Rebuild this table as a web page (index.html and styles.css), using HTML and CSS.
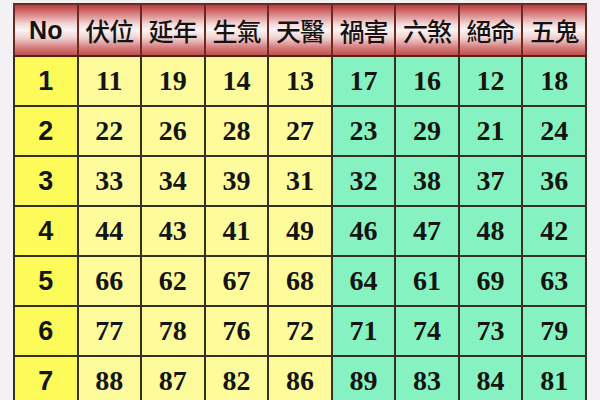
FILE: index.html
```html
<!DOCTYPE html>
<html>
<head>
<meta charset="utf-8">
<link rel="stylesheet" href="styles.css">
</head>
<body>
<div class="page">
<table class="grid">
<thead>
<tr class="head">
<th class="no-h">No</th><th>伏位</th><th>延年</th><th>生氣</th><th>天醫</th><th>禍害</th><th>六煞</th><th>絕命</th><th>五鬼</th>
</tr>
</thead>
<tbody>
<tr><td class="no">1</td><td class="y">11</td><td class="y">19</td><td class="y">14</td><td class="y">13</td><td class="g">17</td><td class="g">16</td><td class="g">12</td><td class="g">18</td></tr>
<tr><td class="no">2</td><td class="y">22</td><td class="y">26</td><td class="y">28</td><td class="y">27</td><td class="g">23</td><td class="g">29</td><td class="g">21</td><td class="g">24</td></tr>
<tr><td class="no">3</td><td class="y">33</td><td class="y">34</td><td class="y">39</td><td class="y">31</td><td class="g">32</td><td class="g">38</td><td class="g">37</td><td class="g">36</td></tr>
<tr><td class="no">4</td><td class="y">44</td><td class="y">43</td><td class="y">41</td><td class="y">49</td><td class="g">46</td><td class="g">47</td><td class="g">48</td><td class="g">42</td></tr>
<tr><td class="no">5</td><td class="y">66</td><td class="y">62</td><td class="y">67</td><td class="y">68</td><td class="g">64</td><td class="g">61</td><td class="g">69</td><td class="g">63</td></tr>
<tr><td class="no">6</td><td class="y">77</td><td class="y">78</td><td class="y">76</td><td class="y">72</td><td class="g">71</td><td class="g">74</td><td class="g">73</td><td class="g">79</td></tr>
<tr><td class="no">7</td><td class="y">88</td><td class="y">87</td><td class="y">82</td><td class="y">86</td><td class="g">89</td><td class="g">83</td><td class="g">84</td><td class="g">81</td></tr>
</tbody>
</table>
</div>
</body>
</html>
```
FILE: styles.css
```css
html, body {
  margin: 0;
  padding: 0;
  background: #f3f1f3;
  width: 600px;
  height: 400px;
  overflow: hidden;
}
.page {
  padding: 3px 0 0 13px;
}
.grid {
  border-collapse: collapse;
  table-layout: fixed;
  width: 574px;
  border: 2px solid #2a2418;
}
.grid th, .grid td {
  padding: 0;
  text-align: center;
  vertical-align: middle;
  border: 2px solid #35311f;
  overflow: hidden;
}
.head th {
  height: 50px;
  font-family: "Noto Sans CJK TC", "Noto Sans CJK SC", sans-serif;
  font-weight: 500;
  font-size: 25px;
  color: #161212;
  letter-spacing: -1px;
  white-space: nowrap;
  border-color: #6a2a22;
  border-bottom: 2px solid #5a2018;
  background: linear-gradient(to bottom, #b84040 0%, #d98080 18%, #f2d8d8 38%, #fbf4f4 50%, #f0d0d0 66%, #d88080 84%, #c05050 100%);
}
.head th.no-h {
  font-family: "Liberation Sans", Arial, sans-serif;
  font-weight: 700;
  font-size: 25px;
  letter-spacing: 0;
}
tbody td {
  height: 48px;
  font-family: "Liberation Serif", "Times New Roman", serif;
  font-weight: 700;
  font-size: 28px;
  color: #141410;
}
td.no {
  background: #fdfb5a;
  font-family: "Liberation Sans", Arial, sans-serif;
  font-size: 27px;
}
td.y {
  background: #fdfb9c;
}
td.g {
  background: #86f2c2;
}
```
